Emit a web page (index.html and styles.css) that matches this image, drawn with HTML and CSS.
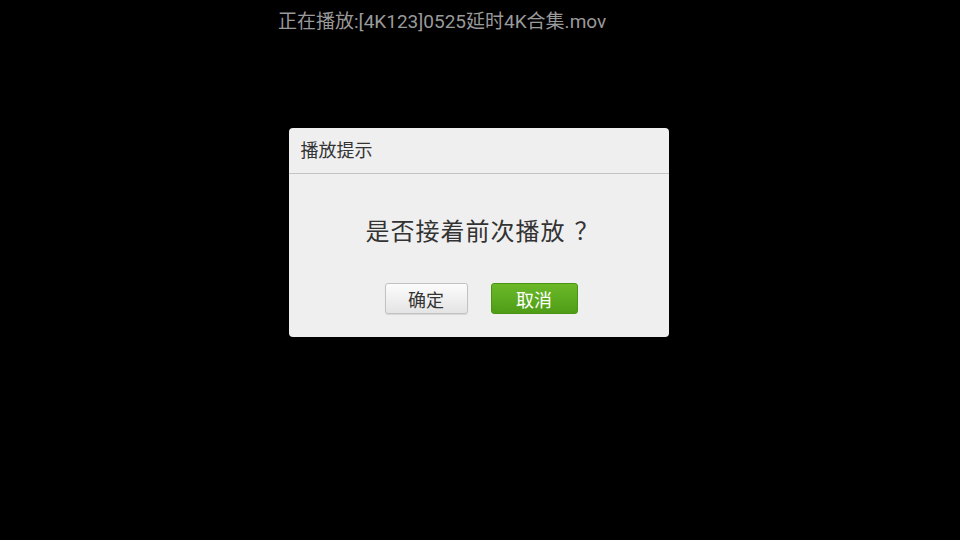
FILE: index.html
```html
<!DOCTYPE html>
<html lang="zh-CN">
<head>
    <meta charset="UTF-8">
    <meta name="viewport" content="width=device-width, initial-scale=1.0">
    <title>播放提示</title>
    <link rel="stylesheet" href="styles.css">
</head>
<body>
    <div class="screen">
        <div class="now-playing">正在播放:[4K123]0525延时4K合集.mov</div>

        <div class="dialog">
            <div class="dialog-title">播放提示</div>
            <div class="dialog-body">
                <div class="message">是否接着前次播放<span class="qmark">？</span></div>
                <div class="buttons">
                    <button class="btn btn-ok">确定</button>
                    <button class="btn btn-cancel">取消</button>
                </div>
            </div>
        </div>
    </div>
</body>
</html>
```

FILE: styles.css
```css
* {
    box-sizing: border-box;
}
body {
    margin: 0;
    background-color: #000;
    font-family: Roboto, "Noto Sans CJK SC", sans-serif;
}
.screen {
    width: 960px;
    height: 540px;
    display: flex;
    flex-direction: column;
    align-items: center;
}
.now-playing {
    align-self: flex-start;
    margin-top: 10px;
    margin-left: 278px;
    height: 24px;
    line-height: 24px;
    font-size: 19px;
    color: #9a9a9a;
}
.dialog {
    width: 380px;
    height: 209px;
    margin-top: 94px;
    margin-left: -3px;
    background-color: #efefef;
    border-radius: 4px;
    display: flex;
    flex-direction: column;
}
.dialog-title {
    height: 46px;
    line-height: 46px;
    padding-left: 12px;
    font-size: 18px;
    color: #333;
    border-bottom: 1px solid #c4c4c4;
}
.dialog-body {
    flex: 1;
    display: flex;
    flex-direction: column;
    align-items: center;
}
.message {
    margin-top: 40px;
    margin-left: 8px;
    height: 36px;
    line-height: 36px;
    font-size: 24px;
    color: #333;
    letter-spacing: 1px;
}
.qmark {
    display: inline-block;
    padding-left: 9px;
}
.buttons {
    display: flex;
    gap: 23px;
    margin-top: 33px;
    margin-left: 5px;
}
.btn {
    height: 31px;
    border-radius: 3px;
    font-family: inherit;
    font-size: 18px;
    padding: 0;
    cursor: pointer;
}
.btn-ok {
    width: 83px;
    color: #333;
    background: linear-gradient(#fcfcfc, #e4e4e4);
    border: 1px solid #c2c2c2;
    box-shadow: 0 1px 1px rgba(0, 0, 0, 0.1);
}
.btn-cancel {
    width: 87px;
    color: #fff;
    background: linear-gradient(#6bb928, #4f9d17);
    border: 1px solid #4a9414;
}
```
